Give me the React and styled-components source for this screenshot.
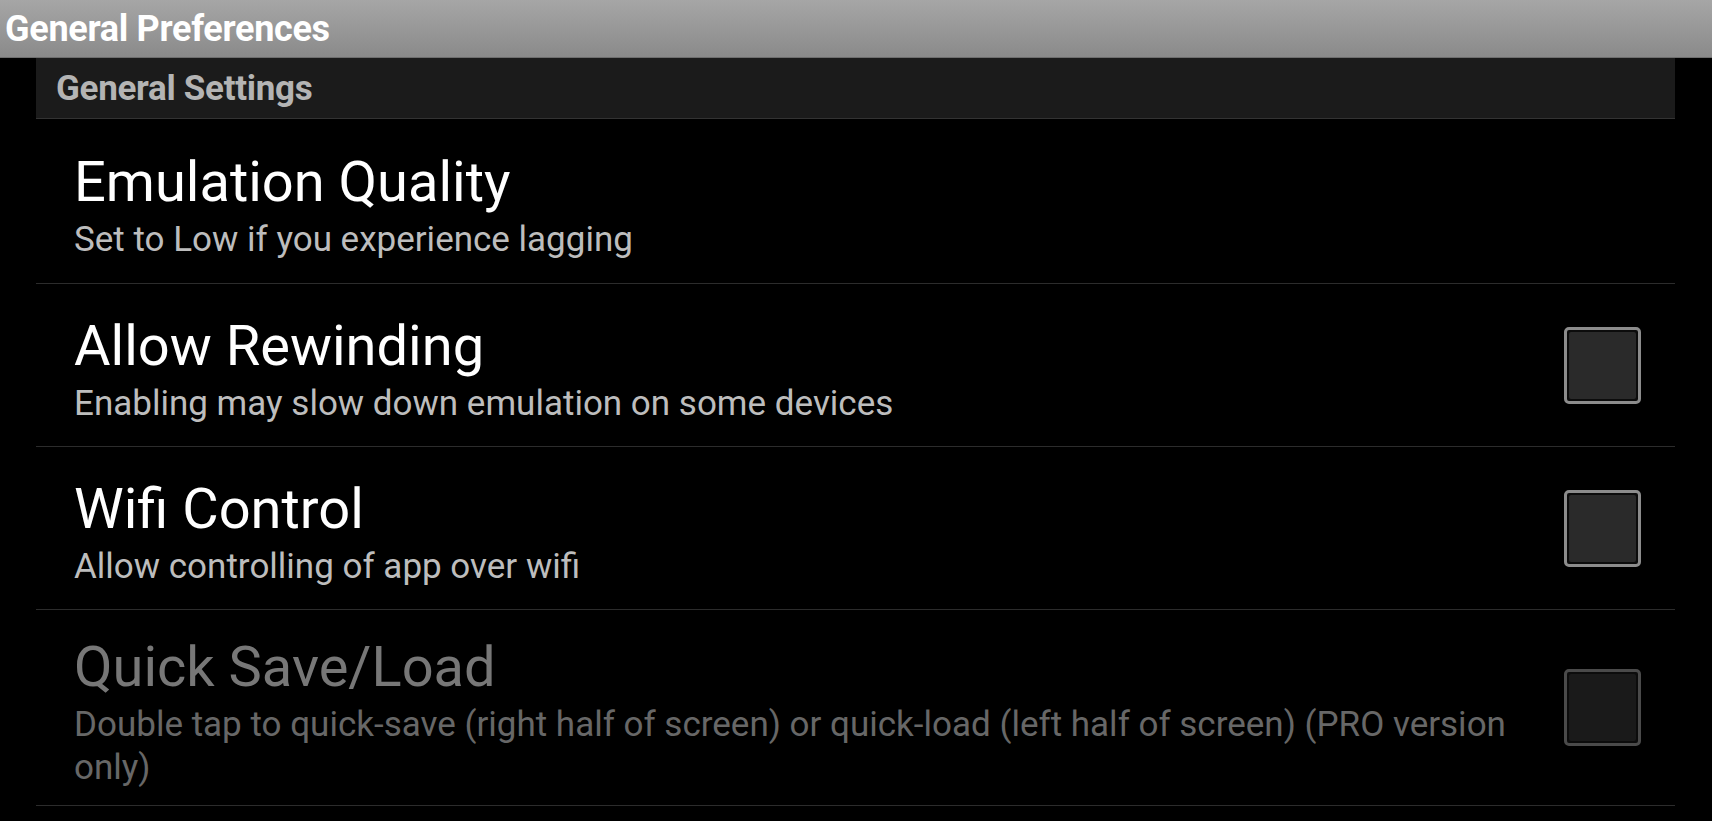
import React from "react";
import styled, { createGlobalStyle } from "styled-components";

const Global = createGlobalStyle`
  html, body { margin: 0; padding: 0; background: #000; }
  body { font-family: Roboto, "Noto Sans", sans-serif; }
`;

const Page = styled.div`
  width: 1712px;
  height: 821px;
  background: #000;
  overflow: hidden;
  display: flex;
  flex-direction: column;
`;

const TitleBar = styled.header`
  height: 57px;
  border-bottom: 1px solid #6e6e6e;
  background: linear-gradient(#a6a6a6, #8a8a8a);
  display: flex;
  align-items: center;
  padding-left: 5px;
  color: #fff;
  font-size: 36px;
  font-weight: 700;
  letter-spacing: -0.3px;
`;

const Column = styled.div`
  margin: 0 37px 0 36px;
  display: flex;
  flex-direction: column;
`;

const Category = styled.div`
  height: 60px;
  background: #1b1b1b;
  border-bottom: 1px solid #333;
  display: flex;
  align-items: center;
  padding-left: 20px;
  color: #b4b4b4;
  font-size: 35px;
  font-weight: 700;
  letter-spacing: -0.3px;
`;

const Row = styled.div`
  display: flex;
  align-items: center;
  min-height: ${(p) => p.$h}px;
  border-bottom: 1px solid #2c2c2c;
  padding: 0 34px 0 38px;
  box-sizing: border-box;
`;

const Texts = styled.div`
  flex: 1;
  display: flex;
  flex-direction: column;
  padding: 6px 36px 0 0;
`;

const Title = styled.div`
  font-size: 56px;
  line-height: 71px;
  color: ${(p) => (p.$disabled ? "#777" : "#fff")};
`;

const Summary = styled.div`
  font-size: 35px;
  line-height: 43px;
  color: ${(p) => (p.$disabled ? "#676767" : "#bdbdbd")};
`;

const Check = styled.div`
  width: 77px;
  height: 77px;
  box-sizing: border-box;
  border-radius: 5px;
  border: 3px solid ${(p) => (p.$disabled ? "#4a4a4a" : "#8c8c8c")};
  padding: 2px;
  background: #0c0c0c;
  flex: none;
  &::after {
    content: "";
    display: block;
    width: 100%;
    height: 100%;
    border-radius: 2px;
    background: ${(p) => (p.$disabled ? "#1a1a1a" : "#2a2a2a")};
  }
`;

const prefs = [
  { title: "Emulation Quality", summary: "Set to Low if you experience lagging", h: 165 },
  { title: "Allow Rewinding", summary: "Enabling may slow down emulation on some devices", check: true, h: 163 },
  { title: "Wifi Control", summary: "Allow controlling of app over wifi", check: true, h: 163 },
  {
    title: "Quick Save/Load",
    summary: "Double tap to quick-save (right half of screen) or quick-load (left half of screen) (PRO version only)",
    check: true,
    disabled: true,
    h: 196,
  },
];

export default function App() {
  return (
    <Page>
      <Global />
      <TitleBar>General Preferences</TitleBar>
      <Column>
        <Category>General Settings</Category>
        {prefs.map((p) => (
          <Row key={p.title} $h={p.h}>
            <Texts>
              <Title $disabled={p.disabled}>{p.title}</Title>
              <Summary $disabled={p.disabled}>{p.summary}</Summary>
            </Texts>
            {p.check && <Check $disabled={p.disabled} />}
          </Row>
        ))}
      </Column>
    </Page>
  );
}
